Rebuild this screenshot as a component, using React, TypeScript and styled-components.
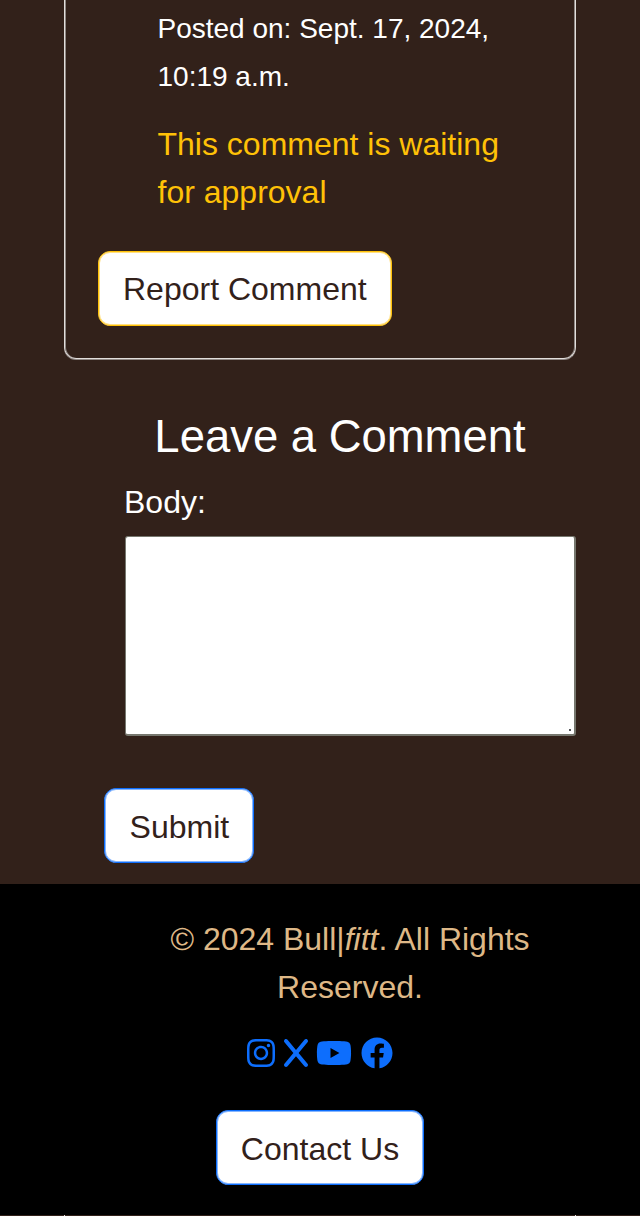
import React from "react";
import styled, { createGlobalStyle } from "styled-components";
import { FaInstagram, FaX, FaYoutube } from "react-icons/fa6";
import { FaFacebook } from "react-icons/fa";

const GlobalStyle = createGlobalStyle`
  *, *::before, *::after { box-sizing: border-box; }
  html, body { margin: 0; background: #32211a; }
  body {
    font-family: "Liberation Sans", Arial, sans-serif;
    font-size: 32px;
    line-height: 48px;
    color: #fff;
  }
  p, h3 { margin: 0; font-weight: 400; }
`;

const Page = styled.div`
  height: 1216px;
  overflow: hidden;
  display: flex;
  flex-direction: column;
`;

const CommentCard = styled.article`
  margin: 0 64px 1px;
  height: 359px;
  padding: 5px 32px 0 33px;
  border: 1px solid #e2dedc;
  border-top: 0;
  border-radius: 0 0 12px 12px;
  box-shadow: inset 1px 0 0 #8f8885, inset -1px 0 0 #8f8885, 0 1px 0 #8f8885;
`;

const CommentText = styled.div`
  padding: 0 40px 0 59.5px;
`;

const PostedOn = styled.p`
  font-size: 28px;
  margin-bottom: 19px;
`;

const Pending = styled.p`
  color: #ffc107;
`;

const Button = styled.button<{ $accent: string; $minWidth?: number; $drop?: number }>`
  display: block;
  height: 75px;
  min-width: ${(p) => p.$minWidth ?? 0}px;
  padding: ${(p) => 1 + (p.$drop ?? 0)}px 24px 0;
  border: 1px solid ${(p) => p.$accent};
  border-radius: 12px;
  box-shadow: inset 0 0 0 1px ${(p) => p.$accent}80;
  background: #fff;
  color: #32211a;
  font: inherit;
  white-space: nowrap;
`;

const ReportRow = styled.div`
  margin-top: 35px;
`;

const CommentForm = styled.form`
  padding: 50px 64px 0 125px;
  height: 524px;
`;

const FormTitle = styled.h3`
  margin: 0 21px 14px 0;
  font-size: 45.44px;
  line-height: 54px;
  text-align: center;
  white-space: nowrap;
`;

const Label = styled.label`
  display: block;
  height: 58px;
  margin-left: -1px;
`;

const TextAreaFrame = styled.div`
  position: relative;
  height: 200px;

  &::after {
    content: "";
    position: absolute;
    right: 5px;
    bottom: 5px;
    width: 2px;
    height: 2px;
    background: #55555a;
  }
`;

const TextArea = styled.textarea`
  display: block;
  width: 100%;
  height: 100%;
  border: solid #76776e;
  border-width: 1px 2px 2px 1px;
  border-radius: 3px;
  background: #fff;
  resize: none;
`;

const SubmitRow = styled.div`
  margin: 52px 0 0 -20.6px;
`;

const Footer = styled.footer`
  height: 331px;
  padding: 31px 64px 0;
  background: #000;
  display: flex;
  flex-direction: column;
  align-items: center;
`;

const Copyright = styled.p`
  margin-left: 60px;
  color: #deb887;
  text-align: center;
`;

const Socials = styled.nav`
  display: flex;
  gap: 8.9px;
  margin: 26px 0 41px;
`;

const SocialLink = styled.a<{ $width: number }>`
  display: block;
  width: ${(p) => p.$width}px;
  height: 32px;
  color: #0d6efd;

  svg {
    display: block;
    width: 100%;
    height: 100%;
  }
`;

const NextCard = styled.div`
  height: 1px;
  margin: 0 64px;
  border: solid #e2dedc;
  border-width: 0 1px;
`;

export default function App() {
  return (
    <>
      <GlobalStyle />
      <Page>
        <CommentCard>
          <CommentText>
            <PostedOn>Posted on: Sept. 17, 2024, 10:19 a.m.</PostedOn>
            <Pending>This comment is waiting for approval</Pending>
          </CommentText>
          <ReportRow>
            <Button $accent="#ffc107">Report Comment</Button>
          </ReportRow>
        </CommentCard>
        <CommentForm>
          <FormTitle>Leave a Comment</FormTitle>
          <Label htmlFor="body">Body:</Label>
          <TextAreaFrame>
            <TextArea id="body" />
          </TextAreaFrame>
          <SubmitRow>
            <Button type="button" $accent="#0d6efd" $minWidth={150} $drop={2}>
              Submit
            </Button>
          </SubmitRow>
        </CommentForm>
        <Footer>
          <Copyright>
            © 2024 Bull|<em>fitt</em>. All Rights Reserved.
          </Copyright>
          <Socials>
            <SocialLink $width={28}><FaInstagram /></SocialLink>
            <SocialLink $width={24}><FaX /></SocialLink>
            <SocialLink $width={36}><FaYoutube /></SocialLink>
            <SocialLink $width={32}><FaFacebook /></SocialLink>
          </Socials>
          <Button $accent="#0d6efd" $drop={2}>Contact Us</Button>
        </Footer>
        <NextCard />
      </Page>
    </>
  );
}
